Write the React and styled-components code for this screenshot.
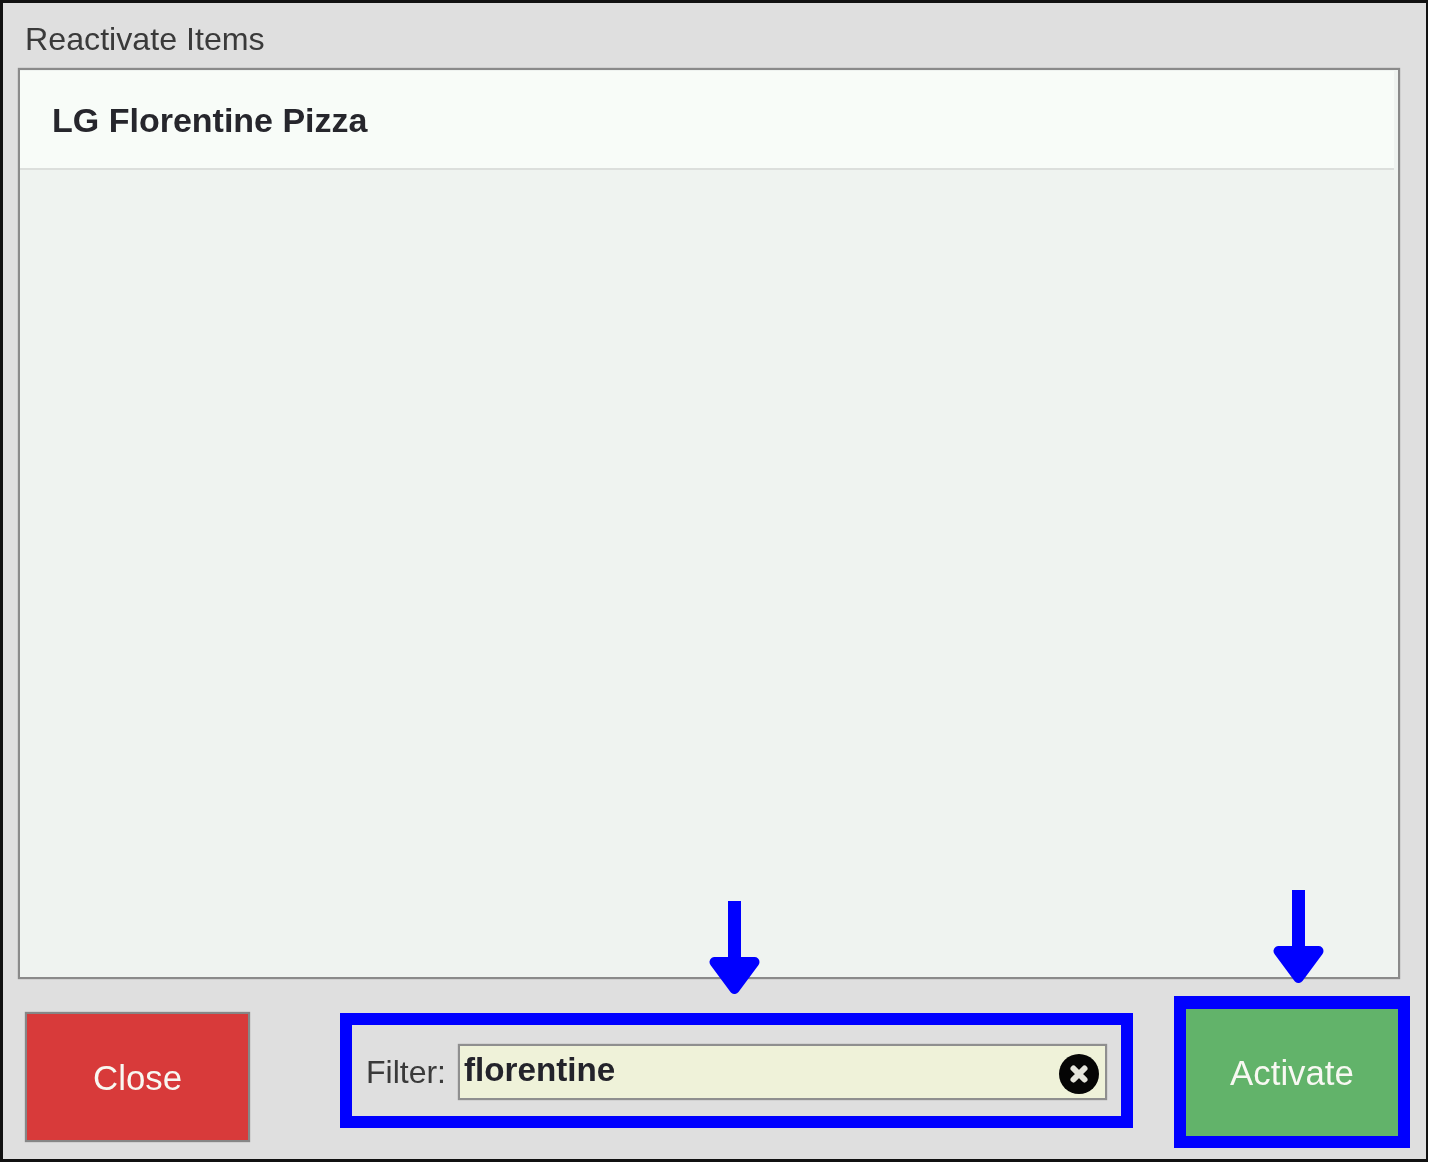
import React from "react";
import styled, { createGlobalStyle } from "styled-components";

const GlobalStyle = createGlobalStyle`
    html, body {
        margin: 0;
        padding: 0;
        background: #fff;
        font-family: "Liberation Sans", Arial, sans-serif;
    }
`;

const Dialog = styled.div`
    box-sizing: border-box;
    width: 1428px;
    height: 1162px;
    background: #dfdfdf;
    border: solid #111;
    border-width: 3px 2px 3px 3px;
`;
const Title = styled.div`
    height: 65px;
    padding: 18px 0 0 22px;
    box-sizing: border-box;
    font-size: 32.2px;
    line-height: 36px;
    color: #3a3a3a;
    filter: blur(0.6px);
`;
const ListPanel = styled.div`
    box-sizing: border-box;
    width: 1382px;
    height: 911px;
    margin-left: 15px;
    background: #eff3f0;
    border: 2px solid #8a8a8a;
    box-shadow: 0 0 1px #8a8a8a;
    padding-top: 1px;
`;
const ListRow = styled.div`
    box-sizing: border-box;
    height: 99px;
    margin-right: 4px;
    padding: 2px 0 0 32px;
    display: flex;
    align-items: center;
    background: #f8fcf8;
    border-bottom: 2px solid #dcdfdc;
    font-size: 34px;
    font-weight: 700;
    color: #26262c;
`;
const RowLabel = styled.span`
    filter: blur(0.6px);
`;
const Footer = styled.div`
    display: flex;
    align-items: flex-start;
    padding-left: 22px;
`;
const ActionButton = styled.div`
    box-sizing: border-box;
    display: flex;
    align-items: center;
    justify-content: center;
    color: #f8f8f2;
    font-size: 34.8px;
    background: ${(p) => p.$bg};
`;
const CloseButton = styled(ActionButton)`
    width: 225px;
    height: 130px;
    margin-top: 33px;
    padding-top: 2px;
    border: 2px solid #868686;
    box-shadow: 0 0 1px #868686;
`;
const FilterBox = styled.div`
    position: relative;
    box-sizing: border-box;
    width: 793px;
    height: 115px;
    margin: 34px 0 0 90px;
    border: 12px solid #0000ff;
    display: flex;
    align-items: flex-start;
    padding: 19px 0 0 14px;
`;
const FilterLabel = styled.span`
    width: 92px;
    font-size: 32px;
    line-height: 56px;
    color: #3a3a3a;
    filter: blur(0.6px);
`;
const FilterField = styled.div`
    box-sizing: border-box;
    width: 649px;
    height: 56px;
    display: flex;
    align-items: flex-start;
    justify-content: space-between;
    padding: 0 5px 0 4px;
    background: #eff2d9;
    border: 2px solid #8f8f8f;
    box-shadow: 0 0 1px #8f8f8f;
    font-size: 33.2px;
    font-weight: 700;
    line-height: 47px;
    color: #23232b;
`;
const FilterValue = styled.span`
    filter: blur(0.5px);
`;
const ClearIcon = styled.svg`
    width: 42px;
    height: 42px;
    margin-top: 7px;
    filter: blur(0.5px);
`;
const ActivateFrame = styled.div`
    position: relative;
    box-sizing: border-box;
    width: 236px;
    height: 152px;
    margin: 17px 0 0 41px;
    border: 12px solid #0000ff;
    border-top-width: 13px;
`;
const ActivateButton = styled(ActionButton)`
    width: 100%;
    height: 100%;
`;
const ButtonLabel = styled.span`
    filter: blur(0.6px);
`;
const Arrow = styled.svg`
    position: absolute;
    width: 51px;
    height: 93px;
    left: ${(p) => p.$left}px;
    top: ${(p) => p.$top}px;
`;

const DownArrow = ({ left, top }) => (
    <Arrow $left={left} $top={top} viewBox="0 0 51 93">
        <rect x="19" y="0" width="13" height="60" fill="#0000ff" />
        <path d="M5.5 61H45.5L25.5 88Z" fill="#0000ff" stroke="#0000ff" strokeWidth="10" strokeLinejoin="round" />
    </Arrow>
);

export default () => {
    return (
        <Dialog>
            <GlobalStyle />
            <Title>Reactivate Items</Title>
            <ListPanel>
                <ListRow>
                    <RowLabel>LG Florentine Pizza</RowLabel>
                </ListRow>
            </ListPanel>
            <Footer>
                <CloseButton $bg="#d83a3a">
                    <ButtonLabel>Close</ButtonLabel>
                </CloseButton>
                <FilterBox>
                    <DownArrow left={357} top={-124} />
                    <FilterLabel>Filter:</FilterLabel>
                    <FilterField>
                        <FilterValue>florentine</FilterValue>
                        <ClearIcon viewBox="0 0 42 42">
                            <circle cx="21" cy="21" r="20" fill="#050505" />
                            <path d="M15.5 15.5L26.5 26.5M26.5 15.5L15.5 26.5" stroke="#e4e4dc" strokeWidth="6" strokeLinecap="round" />
                        </ClearIcon>
                    </FilterField>
                </FilterBox>
                <ActivateFrame>
                    <DownArrow left={87} top={-119} />
                    <ActivateButton $bg="#62b36a">
                        <ButtonLabel>Activate</ButtonLabel>
                    </ActivateButton>
                </ActivateFrame>
            </Footer>
        </Dialog>
    );
};
